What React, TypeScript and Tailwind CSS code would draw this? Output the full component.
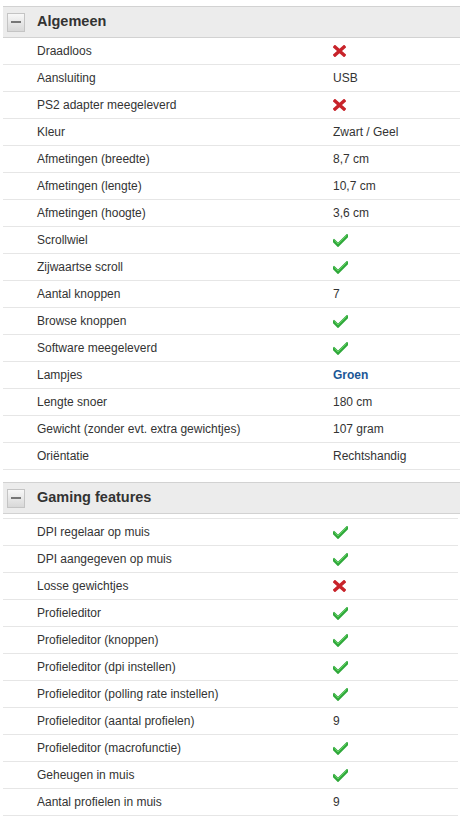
import React from 'react';

type Val = string | boolean | { bold: string };

const algemeen: [string, Val][] = [
    ['Draadloos', false],
    ['Aansluiting', 'USB'],
    ['PS2 adapter meegeleverd', false],
    ['Kleur', 'Zwart / Geel'],
    ['Afmetingen (breedte)', '8,7 cm'],
    ['Afmetingen (lengte)', '10,7 cm'],
    ['Afmetingen (hoogte)', '3,6 cm'],
    ['Scrollwiel', true],
    ['Zijwaartse scroll', true],
    ['Aantal knoppen', '7'],
    ['Browse knoppen', true],
    ['Software meegeleverd', true],
    ['Lampjes', { bold: 'Groen' }],
    ['Lengte snoer', '180 cm'],
    ['Gewicht (zonder evt. extra gewichtjes)', '107 gram'],
    ['Oriëntatie', 'Rechtshandig'],
];

const gaming: [string, Val][] = [
    ['DPI regelaar op muis', true],
    ['DPI aangegeven op muis', true],
    ['Losse gewichtjes', false],
    ['Profieleditor', true],
    ['Profieleditor (knoppen)', true],
    ['Profieleditor (dpi instellen)', true],
    ['Profieleditor (polling rate instellen)', true],
    ['Profieleditor (aantal profielen)', '9'],
    ['Profieleditor (macrofunctie)', true],
    ['Geheugen in muis', true],
    ['Aantal profielen in muis', '9'],
];

const Check = () => (
    <svg width="15" height="13" viewBox="0 0 15 13">
        <path d="M1 7 L5 11 L14 2" fill="none" stroke="#2fa83a" strokeWidth="3.2" strokeLinecap="square" />
        <path d="M1.5 6.5 L5 10 L13.5 1.5" fill="none" stroke="#5fd05f" strokeWidth="1" />
    </svg>
);

const Cross = () => (
    <svg width="13" height="12" viewBox="0 0 13 12">
        <path d="M2 2 L11 10 M11 2 L2 10" fill="none" stroke="#c8232a" strokeWidth="3.4" strokeLinecap="square" />
    </svg>
);

const Value = ({ v }: { v: Val }) => {
    if (v === true) return <Check />;
    if (v === false) return <Cross />;
    if (typeof v === 'object') return <span className="font-bold text-[#1b5796]">{v.bold}</span>;
    return <span>{v}</span>;
};

const Header = ({ title }: { title: string }) => (
    <div className="flex h-[32px] items-center border-y border-[#d2d2d2] bg-[#ececec]">
        <div className="ml-[4px] flex h-[19px] w-[18px] items-center justify-center border border-[#c4c4c4] bg-gradient-to-b from-[#f8f8f8] to-[#d8d8d8]">
            <div className="h-[2px] w-[10px] bg-[#777]" />
        </div>
        <span className="ml-[12px] text-[14.5px] font-bold text-[#333]">{title}</span>
    </div>
);

const Row = ({ label, v }: { label: string; v: Val }) => (
    <div className="flex h-[27px] items-center border-b border-[#e6e6e6] text-[12px] text-[#333]">
        <span className="w-[330px] pl-[34px]">{label}</span>
        <span className="flex items-center">
            <Value v={v} />
        </span>
    </div>
);

export default function App() {
    return (
        <div className="h-[823px] w-[460px] overflow-hidden bg-white pl-[3px] pt-[6px]" style={{ fontFamily: '"Liberation Sans", Arial, sans-serif' }}>
            <Header title="Algemeen" />
            {algemeen.map(([l, v]) => <Row key={l} label={l} v={v} />)}
            <div className="mt-[12px]">
                <Header title="Gaming features" />
            </div>
            <div className="mt-[4px] mr-[2px] border-t border-[#e6e6e6]">
                {gaming.map(([l, v]) => <Row key={l} label={l} v={v} />)}
            </div>
        </div>
    );
}
